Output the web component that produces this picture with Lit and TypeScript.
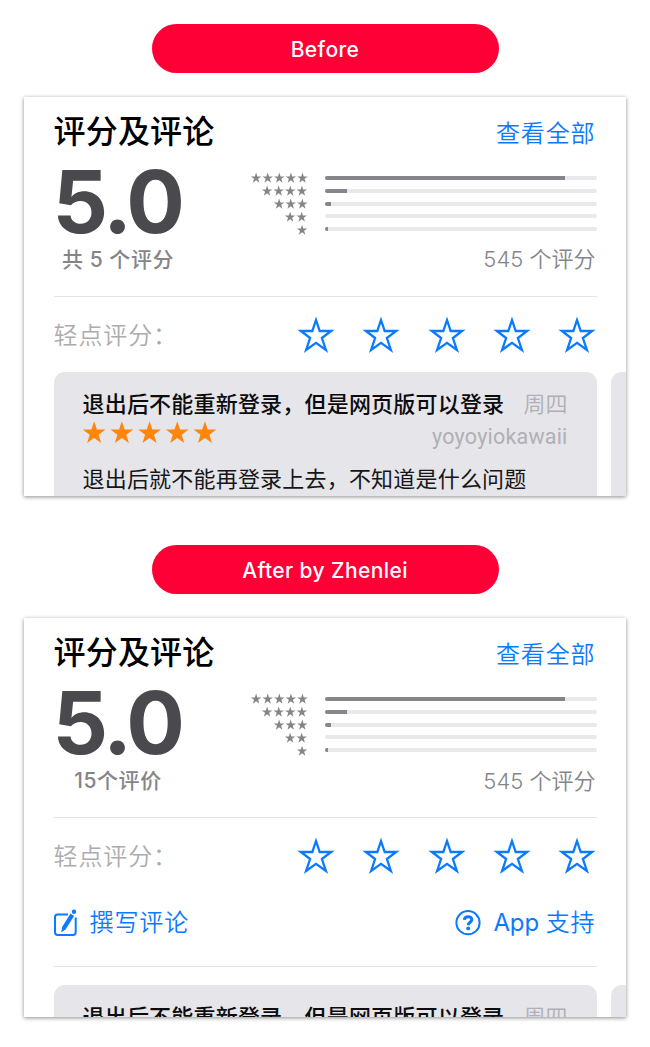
import { LitElement, html, svg, css } from "lit";
import { customElement, property } from "lit/decorators.js";

const STAR = "50,3 61.8,38.2 98.5,38.5 69,60.6 79.9,96 50,74.5 20.1,96 31,60.6 1.5,38.5 38.2,38.2";

const font = css`
  :host {
    display: block;
    font-family: Inter, "Noto Sans CJK SC", sans-serif;
    white-space: nowrap;
  }
  * { box-sizing: border-box; }
  svg { display: block; flex: none; }
`;

@customElement("score-histogram")
class ScoreHistogram extends LitElement {
  static styles = [font, css`
    .rows { display: flex; flex-direction: column; }
    .row { display: flex; align-items: center; justify-content: flex-end; height: 12.85px; }
    .stars { fill: #858588; margin-right: 17px; }
    .track { width: 272px; height: 4px; border-radius: 2px; background: #e9e9eb; overflow: hidden; }
    .fill { height: 4px; background: #86868a; }
  `];
  render() {
    return html`<div class="rows">
      ${[240, 22, 6, 0, 3].map((w, i) => {
        const n = 5 - i;
        return html`<div class="row">
          <svg class="stars" width=${n * 11.6} height="11" viewBox="0 0 ${n * 11.6} 11">
            ${Array.from({ length: n }, (_, k) => svg`<polygon points=${STAR}
              transform="translate(${k * 11.6 + 0.7} 0.3) scale(0.108)"></polygon>`)}
          </svg>
          <div class="track"><div class="fill" style="width:${w}px"></div></div>
        </div>`;
      })}
    </div>`;
  }
}

@customElement("review-strip")
class ReviewStrip extends LitElement {
  static styles = [font, css`
    .strip { display: flex; gap: 14px; }
    .review { flex: none; width: 543.5px; height: 170px; border-radius: 11px; background: #e5e5ea; padding: 14px 29.5px 0 29px; }
    .line { display: flex; justify-content: space-between; align-items: center; height: 32px; }
    .headline { font-size: 22px; letter-spacing: 0.2px; font-weight: 500; color: #0c0c0e; }
    .day { font-size: 22px; font-weight: 350; color: #b0b0b4; }
    .second { height: 30px; }
    .user { font-family: Roboto, sans-serif; font-size: 21.5px; letter-spacing: 0.2px; color: #b0b0b4; padding-top: 6px; }
    .stars { fill: #ff860d; }
    .body { font-size: 22px; letter-spacing: 0.2px; color: #161618; line-height: 32px; margin-top: 15px; }
  `];
  render() {
    return html`<div class="strip">
      <div class="review">
        <div class="line"><span class="headline">退出后不能重新登录，但是网页版可以登录</span><span class="day">周四</span></div>
        <div class="line second">
          <svg class="stars" width="135" height="26" viewBox="0 0 135 26">
            ${[0, 1, 2, 3, 4].map((k) => svg`<polygon points=${STAR}
              transform="translate(${k * 27.7 - 0.6} 0.5) scale(0.235)"></polygon>`)}
          </svg>
          <span class="user">yoyoyiokawaii</span>
        </div>
        <div class="body">退出后就不能再登录上去，不知道是什么问题</div>
      </div>
      <div class="review"></div>
    </div>`;
  }
}

@customElement("ratings-card")
class RatingsCard extends LitElement {
  @property() summary = "";
  @property({ type: Boolean }) actions = false;

  static styles = [font, css`
    .card { width: 602px; height: 399px; overflow: hidden; padding: 0 29.5px; background: #fff;
      display: flex; flex-direction: column; }
    .shell { box-shadow: 0 1px 4px rgba(0, 0, 0, 0.45); }
    .header { display: flex; justify-content: space-between; height: 70px; flex: none; }
    .title { font-size: 32px; letter-spacing: 0.2px; font-weight: 500; line-height: 48px; padding-top: 11px; color: #000; }
    .link { font-size: 24px; letter-spacing: 0.9px; font-weight: 400; color: #0a7aff; line-height: 36px; margin-right: 1px; }
    .header .link { padding-top: 19px; font-weight: 350; }
    .overview { display: flex; justify-content: space-between; height: 75px; flex: none; }
    .score { font-size: 87px; font-weight: 700; line-height: 70px; letter-spacing: -3.2px; color: #4a4a4e; margin-left: -1px; }
    .histogram { padding-top: 4.5px; }
    .counts { display: flex; justify-content: space-between; height: 54px; flex: none; line-height: 35px; color: #858588; }
    .summary { width: 129px; text-align: center; font-size: 21px; font-weight: 500; letter-spacing: 0.55px; }
    .total { font-size: 22px; font-weight: 350; letter-spacing: 0; margin-right: 1px; }
    .tall { line-height: 36px; }
    .divider { height: 1px; background: #e4e4e6; flex: none; }
    .rate { display: flex; justify-content: space-between; align-items: center; height: 75px; flex: none; }
    .prompt { font-size: 24px; letter-spacing: 0.9px; font-weight: 350; color: #acacae; margin-top: -2px; }
    .outline { display: flex; gap: 27.4px; margin-right: 0.2px; }
    .outline polygon { fill: none; stroke: #0a7aff; stroke-width: 2.3; stroke-miterlimit: 10; }
    .actions { display: flex; justify-content: space-between; height: 73px; padding-top: 12px; flex: none; }
    .action { display: flex; align-items: center; height: 36px; gap: 12px; }
    .action .cjk { font-weight: 350; }
    .latin { letter-spacing: -0.1px; }
    .gap { height: 18px; flex: none; }
  `];

  render() {
    return html`<div class="shell"><div class="card">
      <div class="header"><span class="title">评分及评论</span><span class="link">查看全部</span></div>
      <div class="overview">
        <div class="score">5.0</div>
        <score-histogram class="histogram"></score-histogram>
      </div>
      <div class="counts ${this.actions ? "tall" : ""}"><span class="summary">${this.summary}</span><span class="total">545 个评分</span></div>
      <div class="divider"></div>
      <div class="rate">
        <span class="prompt">轻点评分：</span>
        <div class="outline">
          ${[0, 1, 2, 3, 4].map(() => html`<svg width="38" height="38" viewBox="0 0 38 38">
            <polygon points="19,4 22.7,15 34.2,15 24.9,22 28.9,34 19,26.8 9.1,34 13.1,22 3.8,15 15.3,15"></polygon>
          </svg>`)}
        </div>
      </div>
      ${this.actions ? html`
        <div class="actions">
          <span class="action link">
            <svg width="24" height="28" viewBox="0 0 24 28" fill="none" stroke="#0a7aff" stroke-width="2">
              <path d="M14 5.500H3.500Q1 5.500 1 8V23.300Q1 26 3.700 26H19Q21.700 26 21.700 23.300V8.500"></path>
              <path d="M16.600 4.600 20 6.900 11.700 20.300 7.300 23.300 8.100 18.100Z" fill="#0a7aff" stroke="none"></path>
              <circle cx="20" cy="2.800" r="2.200" fill="#0a7aff" stroke="none"></circle>
            </svg><span class="cjk">撰写评论</span>
          </span>
          <span class="action link">
            <svg width="26" height="26" viewBox="0 0 26 26" fill="none" stroke="#0a7aff">
              <circle cx="13" cy="12.700" r="11.600" stroke-width="2"></circle>
              <path d="M9.300 9.900C9.500 5.500 16.900 5.700 16.800 9.700C16.700 12.300 13.200 12.300 13.200 15.300" stroke-width="3"></path>
              <circle cx="13.200" cy="18.400" r="1.900" fill="#0a7aff" stroke="none"></circle>
            </svg><span><span class="latin">App </span><span class="cjk">支持</span></span>
          </span>
        </div>
        <div class="divider"></div><div class="gap"></div>` : ""}
      <review-strip></review-strip>
    </div></div>`;
  }
}

@customElement("app-root")
class AppRoot extends LitElement {
  static styles = [font, css`
    :host { height: 1047px; background: #fff; }
    .page { display: flex; flex-direction: column; align-items: center; padding-top: 24px; }
    .pill { width: 347px; height: 49px; border-radius: 25px; background: #ff0036; color: #fff;
      font-size: 21px; font-weight: 500; letter-spacing: 0.4px; line-height: 51px; text-align: center; margin-bottom: 24px; }
    .first { margin-bottom: 49px; }
  `];
  render() {
    return html`<div class="page">
      <div class="pill">Before</div>
      <ratings-card class="first" summary="共 5 个评分"></ratings-card>
      <div class="pill">After by Zhenlei</div>
      <ratings-card summary="15个评价" actions></ratings-card>
    </div>`;
  }
}
